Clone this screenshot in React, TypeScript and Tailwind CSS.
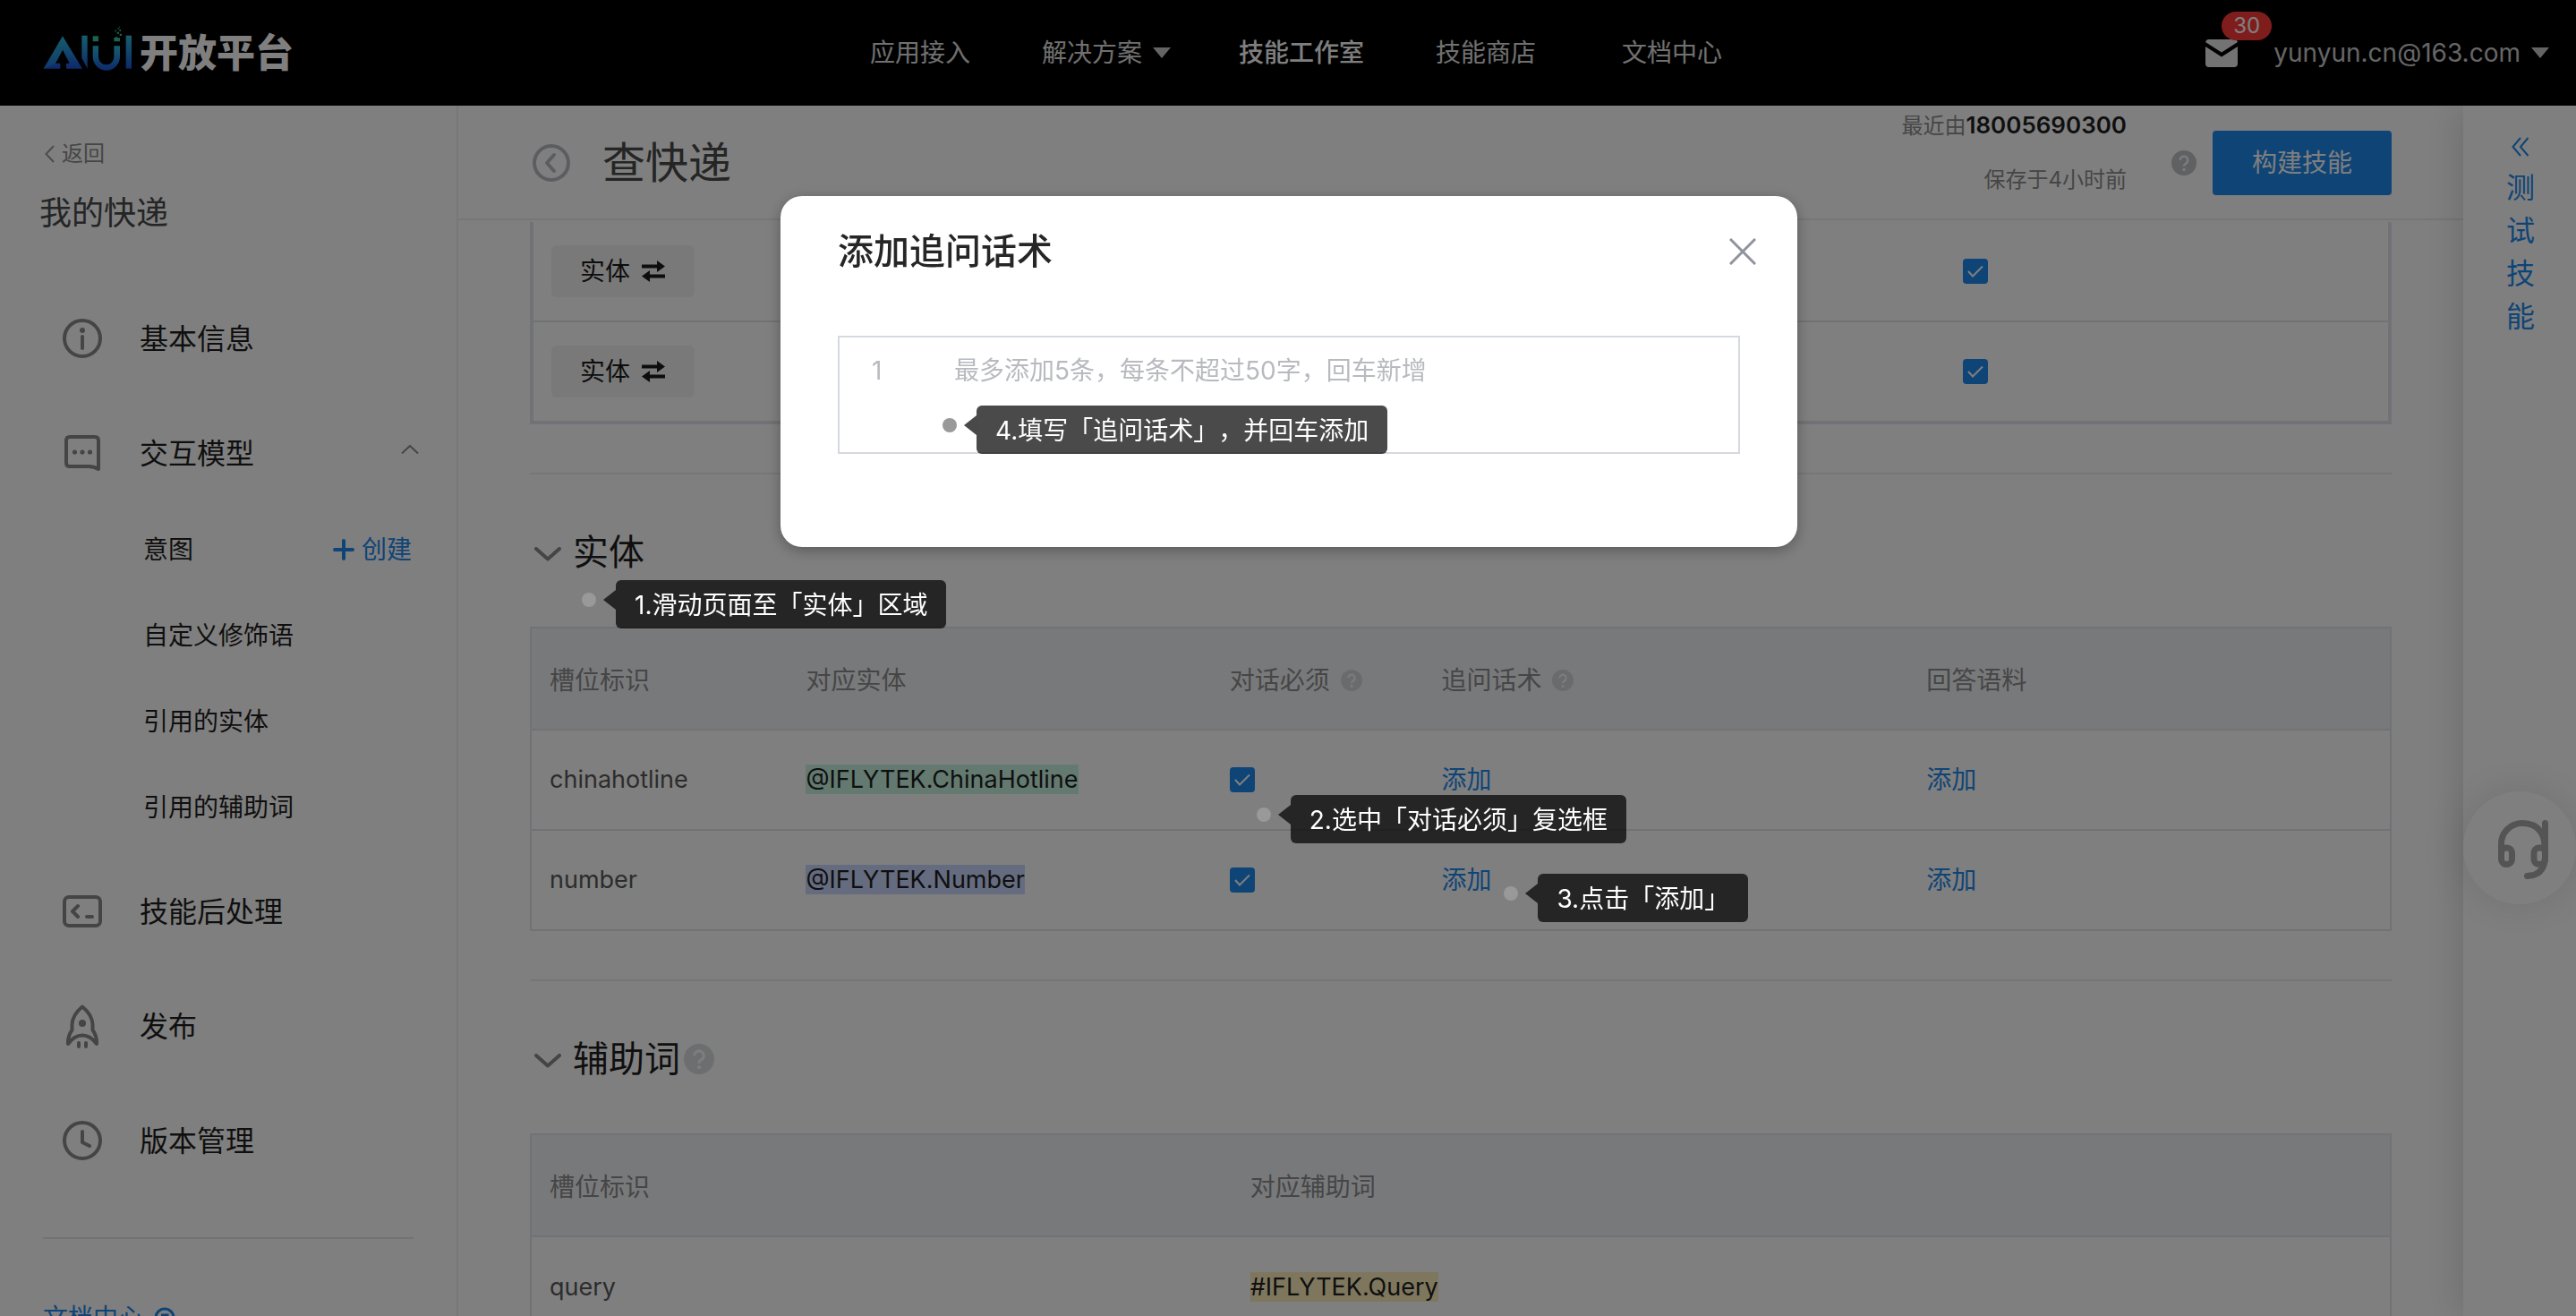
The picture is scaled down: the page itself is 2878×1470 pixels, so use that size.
import React from 'react';

const navItems = [
  { label: '应用接入', className: 'text-[#e0e0e0]' },
  { label: '解决方案', className: '-mr-1 text-[#e0e0e0]', caret: true },
  { label: '技能工作室', className: 'font-medium text-white' },
  { label: '技能商店', className: 'pr-4 text-[#e0e0e0]' },
  { label: '文档中心', className: 'text-[#e0e0e0]' },
];

function Caret() {
  return (
    <svg viewBox="0 0 20 12" className="h-3 w-5" fill="#c8c8c8" aria-hidden="true">
      <path d="M0 0h20L10 12z" />
    </svg>
  );
}

function LogoMark() {
  return (
    <svg viewBox="24 28 300 180" className="h-[60px] w-[100px]" role="img" aria-label="AIUI">
      <defs>
        <linearGradient id="blue" x1="0" y1="0" x2="0" y2="1">
          <stop offset="0" stopColor="#2cbcd4" />
          <stop offset="0.45" stopColor="#2490dc" />
          <stop offset="1" stopColor="#1c52d8" />
        </linearGradient>
      </defs>
      <path d="M90 62L156 171H102V153H113L90 108L66 153H82V171H26z" fill="url(#blue)" />
      <path d="M90 62L26 171L66 153L90 108z" fill="#2fa4cc" opacity="0.45" />
      <path d="M154 60h19v111l-19-36z" fill="url(#blue)" />
      <path d="M191 95h19v36a26 27 0 0 0 52 0V95h20v36a45.500 46 0 0 1-91 0z" fill="url(#blue)" />
      <path d="M302 60h19v111h-19z" fill="url(#blue)" />
      <path
        d="M191 62h19v18h-19zM262 68l8-4 6 4h6v12h-20zM272 48h7v6h-7zM281 54h7v7h-7zM265 42h5v5h-5zM280 40h5v6h-5zM275 35h4v4h-4zM279 30h3v3h-3z"
        fill="#38c49c"
      />
    </svg>
  );
}

function Header() {
  return (
    <header className="grid h-[118px] shrink-0 grid-cols-[1fr_auto_1fr] items-center bg-black pl-12 pr-[30px]">
      <a href="#home" className="flex items-center gap-2">
        <LogoMark />
        <span className="text-[43px] font-black leading-none text-white">开放平台</span>
      </a>
      <nav className="flex items-center gap-20 text-[28px]">
        {navItems.map((item) => (
          <a key={item.label} href="#nav" className={item.className}>
            {item.caret ? (
              <span className="flex items-center gap-3">
                {item.label}
                <Caret />
              </span>
            ) : (
              item.label
            )}
          </a>
        ))}
      </nav>
      <div className="flex items-center justify-end">
        <button type="button" className="relative mr-10" aria-label="消息">
          <svg viewBox="0 0 36 31" className="h-[31px] w-9" fill="#e6e6e6" aria-hidden="true">
            <path d="M3.500 0h29Q35 0 36 3L18 14.500 0 3Q1 0 3.500 0z" />
            <path d="M0 8l18 11.500L36 8v19q0 4-4 4H4q-4 0-4-4z" />
          </svg>
          <span className="absolute -top-[31px] left-[18px] flex h-8 w-14 items-center justify-center rounded-full bg-[#ff3b3b] text-[24px] text-white">
            30
          </span>
        </button>
        <button type="button" className="flex items-center gap-3 text-[28px] text-[#cccccc]">
          yunyun.cn@163.com
          <Caret />
        </button>
      </div>
    </header>
  );
}

const iconProps = {
  viewBox: '0 0 44 44',
  className: 'h-11 w-11',
  fill: 'none',
  stroke: '#8a8a8a',
  strokeWidth: 4,
  strokeLinecap: 'round' as const,
  strokeLinejoin: 'round' as const,
  'aria-hidden': true,
};

const InfoIcon = () => (
  <svg {...iconProps}>
    <circle cx="22" cy="22" r="20" />
    <path d="M22 20v13" />
    <circle cx="22" cy="13" r="3" fill="#8a8a8a" stroke="none" />
  </svg>
);
const ChatIcon = () => (
  <svg {...iconProps}>
    <path d="M8 4h28q4 0 4 4v32q-5-3-11-3H8q-4 0-4-4V8q0-4 4-4z" />
    <g fill="#8a8a8a" stroke="none">
      <circle cx="13.500" cy="21" r="2.600" />
      <circle cx="22" cy="21" r="2.600" />
      <circle cx="30.500" cy="21" r="2.600" />
    </g>
  </svg>
);
const CodeIcon = () => (
  <svg {...iconProps}>
    <rect x="2" y="6" width="40" height="32" rx="5" />
    <path d="M17 16l-6 6 6 6M27 28h6" />
  </svg>
);
const RocketIcon = () => (
  <svg {...iconProps} overflow="visible">
    <path d="M22 0.500q11 9 11.500 20v6q5 7 4.500 15.500q-7-9.500-16-9.500T6 42q-0.500-8.500 4.500-15.500v-6Q11 9.500 22 0.500z" />
    <circle cx="22" cy="19" r="4" fill="#8a8a8a" stroke="none" />
    <path d="M18 41v4M26 41v4" />
  </svg>
);
const ClockIcon = () => (
  <svg {...iconProps}>
    <circle cx="22" cy="22" r="20" />
    <path d="M22 12v12l8 4" />
  </svg>
);

function MenuItem({ icon, label, open }: { icon: React.ReactNode; label: string; open?: boolean }) {
  return (
    <a href="#menu" className="flex h-32 items-center pl-[70px] pr-[42px] text-[32px] text-[#1f1f1f]">
      {icon}
      <span className="ml-[42px] pt-[2px]">{label}</span>
      {open && (
        <svg viewBox="0 0 20 10" className="mb-2 ml-auto h-[10px] w-5" fill="none" stroke="#8a8a8a" strokeWidth="2" aria-hidden="true">
          <path d="M1 9.500L10 1l9 8.500" />
        </svg>
      )}
    </a>
  );
}

function Sidebar() {
  return (
    <aside className="w-[512px] shrink-0 overflow-hidden border-r-2 border-[#f0f0f2] bg-white pt-9">
      <a href="#back" className="flex h-9 items-center gap-2 pl-[50px] text-[24px] text-[#8c8c8c]">
        <svg viewBox="0 0 11 20" className="h-5 w-[11px]" fill="none" stroke="#999" strokeWidth="2" aria-hidden="true">
          <path d="M10 1L1.500 10 10 19" />
        </svg>
        返回
      </a>
      <h2 className="mt-5 pl-11 text-[36px] leading-[56px] text-[#4a4a4a]">我的快递</h2>
      <nav className="mt-12">
        <MenuItem icon={<InfoIcon />} label="基本信息" />
        <MenuItem icon={<ChatIcon />} label="交互模型" open />
        <ul className="-mt-1 mb-1 text-[28px] text-[#1f1f1f]">
          <li className="flex h-24 items-center justify-between pl-40 pr-[50px]">
            <a href="#intent">意图</a>
            <button type="button" className="flex items-center gap-2 text-[#1e88ec]">
              <svg viewBox="0 0 24 24" className="h-6 w-6" stroke="currentColor" strokeWidth="4" strokeLinecap="round" aria-hidden="true">
                <path d="M12 2v20M2 12h20" />
              </svg>
              创建
            </button>
          </li>
          {['自定义修饰语', '引用的实体', '引用的辅助词'].map((t) => (
            <li key={t} className="flex h-24 items-center pl-40">
              <a href="#sub">{t}</a>
            </li>
          ))}
        </ul>
        <MenuItem icon={<CodeIcon />} label="技能后处理" />
        <MenuItem icon={<RocketIcon />} label="发布" />
        <MenuItem icon={<ClockIcon />} label="版本管理" />
      </nav>
      <hr className="mx-12 mt-11 border-t-2 border-[#e4e5ee]" />
      <a href="#docs" className="mt-[68px] flex h-10 items-center gap-3 pl-12 text-[28px] text-[#1e88ec]">
        文档中心
        <svg viewBox="0 0 24 24" className="h-6 w-6" fill="none" stroke="currentColor" strokeWidth="3" aria-hidden="true">
          <circle cx="12" cy="12" r="10" />
          <path d="M8 9h7v7M15 9l-7 7" />
        </svg>
      </a>
    </aside>
  );
}

function Help({ size, color }: { size: string; color: string }) {
  return (
    <svg viewBox="0 0 24 24" className={size} aria-hidden="true">
      <circle cx="12" cy="12" r="12" fill={color} />
      <path d="M8.300 9.300a3.700 3.700 0 1 1 5.600 3.200q-1.900 1.100-1.900 2.800" fill="none" stroke="#fff" strokeWidth="2.200" opacity="0.85" />
      <circle cx="12" cy="18.500" r="1.500" fill="#fff" opacity="0.85" />
    </svg>
  );
}

function Callout({ text, place }: { text: string; place: string }) {
  return (
    <span className={`absolute z-50 flex items-start whitespace-nowrap text-[28px] text-white [text-spacing-trim:space-all] ${place}`}>
      <span className="mr-2 mt-[14px] h-4 w-4 rounded-full bg-[#999999]" />
      <svg viewBox="0 0 14 22" className="mt-[11px] h-[22px] w-[14px]" fill="#000" opacity="0.71" aria-hidden="true">
        <path d="M0 11L14 0v22z" />
      </svg>
      <span className="h-[54px] rounded-[6px] bg-black/71 px-[21px] leading-[56px]">{text}</span>
    </span>
  );
}

function Check({ label }: { label: string }) {
  return (
    <span className="grid h-7 w-7">
      <input
        type="checkbox"
        defaultChecked
        aria-label={label}
        className="col-start-1 row-start-1 h-7 w-7 appearance-none rounded-[4px] bg-[#1e88ec]"
      />
      <svg viewBox="0 0 28 28" className="pointer-events-none col-start-1 row-start-1 h-7 w-7" fill="none" stroke="#fff" strokeWidth="2" aria-hidden="true">
        <path d="M6 14l5 5.500L22 8.500" />
      </svg>
    </span>
  );
}

function TypeButton() {
  return (
    <button type="button" className="flex h-[58px] items-center gap-3 rounded-[6px] bg-[#f3f3f3] px-8 text-[28px] text-[#1a1a1a]">
      实体
      <svg viewBox="0 0 28 24" className="h-6 w-7" fill="none" stroke="currentColor" strokeWidth="4" aria-hidden="true">
        <path d="M1 6.500h20M27 17.500H7" />
        <path d="M18 0l9 6.500-9 6.500zM10 11l-9 6.500 9 6.500z" fill="currentColor" stroke="none" />
      </svg>
    </button>
  );
}

function SectionTitle({ text, help, children }: { text: string; help?: boolean; children?: React.ReactNode }) {
  return (
    <div className="relative mt-[54px] h-[172px] border-t-2 border-[#ebecf3] pt-[59px]">
      <h3 className="flex h-14 items-center text-[40px] leading-[56px] text-[#1f1f1f]">
        <svg viewBox="0 0 30 16" className="ml-[5px] mr-[13px] mt-1 h-4 w-[30px]" fill="none" stroke="#8a8a8a" strokeWidth="4" strokeLinecap="round" strokeLinejoin="round" aria-hidden="true">
          <path d="M2 2l13 11.500L28 2" />
        </svg>
        {text}
        {help && (
          <span className="ml-1">
            <Help size="h-[34px] w-[34px]" color="#d9dce0" />
          </span>
        )}
      </h3>
      {children}
    </div>
  );
}

const th = 'h-[114px] border-b-2 border-[#e2e4ea] pl-5 pt-[3px] text-left font-normal';
const td = 'h-28 pl-5 border-[#e2e4ea]';

const slots = [
  { name: 'chinahotline', entity: '@IFLYTEK.ChinaHotline', color: 'bg-[#c8f4e2]' },
  { name: 'number', entity: '@IFLYTEK.Number', color: 'bg-[#cdd8ff]' },
];

function Content() {
  return (
    <main className="min-w-0 flex-1 overflow-hidden bg-white">
      <div className="flex h-32 items-center border-b-2 border-[#ebecf3] px-20 pt-[2px]">
        <button type="button" aria-label="返回" className="ml-[3px]">
          <svg viewBox="0 0 42 42" className="h-[42px] w-[42px]" fill="none" stroke="#b8bbc0" strokeWidth="4" strokeLinecap="round" strokeLinejoin="round" aria-hidden="true">
            <circle cx="21" cy="21" r="19" />
            <path d="M24 12l-8 9 8 9" />
          </svg>
        </button>
        <h1 className="ml-9 text-[48px] leading-[64px] text-[#4a4a4a]">查快递</h1>
        <div className="ml-auto mr-[50px] pb-6 text-right text-[24px] leading-[60px] text-[#8c8c8c]">
          <p>
            最近由<span className="text-[26px] font-semibold text-[#1f1f1f]">18005690300</span>
          </p>
          <p>保存于4小时前</p>
        </div>
        <Help size="h-7 w-7" color="#bfc2c7" />
        <button type="button" className="ml-[18px] h-[72px] w-[200px] rounded-[4px] bg-[#1e88ec] text-[28px] text-white">
          构建技能
        </button>
      </div>

      <div className="px-20">
        <div className="mt-[2px] border-x-4 border-b-4 border-[#e2e4ea]">
          <table className="w-full table-fixed border-separate border-spacing-0">
            <colgroup>
              <col className="w-[76%]" />
              <col />
            </colgroup>
            <tbody>
              {['手机号', '单号'].map((label, i) => (
                <tr key={label}>
                  <td className={i ? 'h-28 border-t-2 border-[#e2e4ea] pl-5' : 'h-[110px] pl-5'}>
                    <TypeButton />
                  </td>
                  <td className={i ? 'h-28 border-t-2 border-[#e2e4ea] pl-[22px]' : 'h-[110px] pl-[22px]'}>
                    <Check label={label} />
                  </td>
                </tr>
              ))}
            </tbody>
          </table>
        </div>

        <SectionTitle text="实体">
          <Callout text="1.滑动页面至「实体」区域" place="left-[58px] top-[118px]" />
        </SectionTitle>
        <div className="border-2 border-[#e2e4ea]">
          <table className="w-full table-fixed border-separate border-spacing-0 text-[28px] text-[#595959]">
            <colgroup>
              <col className="w-[13.8%]" />
              <col className="w-[22.8%]" />
              <col className="w-[11.4%]" />
              <col className="w-[26.1%]" />
              <col />
            </colgroup>
            <thead className="bg-[#f1f3f7] text-[#8c8c8c]">
              <tr>
                <th className={th}>槽位标识</th>
                <th className={th}>对应实体</th>
                <th className={th}>
                  <span className="flex items-center gap-3">
                    对话必须
                    <Help size="h-6 w-6" color="#d3d6db" />
                  </span>
                </th>
                <th className={th}>
                  <span className="flex items-center gap-3">
                    追问话术
                    <Help size="h-6 w-6" color="#d3d6db" />
                  </span>
                </th>
                <th className={th}>回答语料</th>
              </tr>
            </thead>
            <tbody>
              {slots.map((slot, i) => {
                const cell = i ? `${td} border-t-2` : 'h-[110px] pl-5';
                return (
                  <tr key={slot.name}>
                    <td className={`${cell} text-[27px]`}>{slot.name}</td>
                    <td className={`${cell} text-[27px]`}>
                      <span className={`text-[#1f1f1f] ${slot.color}`}>{slot.entity}</span>
                    </td>
                    <td className={cell}>
                      <div className="relative">
                        <Check label={slot.name} />
                        {i === 0 && <Callout text="2.选中「对话必须」复选框" place="left-[30px] top-[31px]" />}
                      </div>
                    </td>
                    <td className={cell}>
                      <div className="relative">
                        <button type="button" className="text-[#1e88ec]">添加</button>
                        {i === 1 && <Callout text="3.点击「添加」" place="left-[70px] top-[14px]" />}
                      </div>
                    </td>
                    <td className={cell}>
                      <button type="button" className="text-[#1e88ec]">添加</button>
                    </td>
                  </tr>
                );
              })}
            </tbody>
          </table>
        </div>

        <SectionTitle text="辅助词" help />
        <div className="border-2 border-[#e2e4ea]">
          <table className="w-full table-fixed border-separate border-spacing-0 text-[28px] text-[#595959]">
            <colgroup>
              <col className="w-[37.7%]" />
              <col />
            </colgroup>
            <thead className="bg-[#f1f3f7] text-[#8c8c8c]">
              <tr>
                <th className={th}>槽位标识</th>
                <th className={th}>对应辅助词</th>
              </tr>
            </thead>
            <tbody>
              <tr className="text-[27px]">
                <td className={td}>query</td>
                <td className={td}>
                  <span className="bg-[#fceebc] text-[#1f1f1f]">#IFLYTEK.Query</span>
                </td>
              </tr>
            </tbody>
          </table>
        </div>
      </div>
    </main>
  );
}

function TestRail() {
  return (
    <aside className="relative w-[126px] shrink-0 bg-white pt-[35px] shadow-[-4px_0_40px_rgba(0,0,0,0.15)]">
      <button type="button" className="ml-[46px] flex w-9 flex-col items-center text-[32px] leading-[48px] text-[#1e88ec]">
        <svg viewBox="0 0 20 22" className="mb-[11px] h-[22px] w-5" fill="none" stroke="currentColor" strokeWidth="2" aria-hidden="true">
          <path d="M10 1L1.500 11 10 21M18.500 1L10 11l8.500 10" />
        </svg>
        {['测', '试', '技', '能'].map((c) => (
          <span key={c}>{c}</span>
        ))}
      </button>
      <button
        type="button"
        aria-label="客服"
        className="absolute left-0 top-[766px] h-[126px] w-[126px] rounded-full bg-white shadow-[0_0_50px_rgba(0,0,0,0.12)]"
      >
        <svg viewBox="0 0 126 126" fill="none" stroke="#a8a8a8" strokeWidth="7" strokeLinecap="round" aria-hidden="true">
          <path d="M42.500 66V58.500A23.500 23 0 0 1 66 35.500q14 0 20.500 9.500q4 6 4.500 15" />
          <path d="M91.500 35.500V74q-1 16-13 19.500L71.500 94.500" />
          <path d="M88 48h7v24h-7z" fill="#a8a8a8" stroke="none" />
          <rect x="42.500" y="63" width="12" height="18.500" rx="5.500" />
          <rect x="79" y="63" width="12.500" height="18.500" rx="5.500" />
        </svg>
      </button>
    </aside>
  );
}

function PromptDialog() {
  return (
    <div className="fixed inset-0 z-40 flex items-start justify-center bg-black/50 pl-[2px] pt-[219px]">
      <div
        role="dialog"
        aria-modal="true"
        aria-labelledby="dialog-title"
        className="w-full max-w-[1136px] rounded-[24px] bg-white px-16 pb-[104px] pt-9 shadow-[0_4px_16px_rgba(0,0,0,0.3)]"
      >
        <div className="flex h-[52px] items-center justify-between">
          <h2 id="dialog-title" className="text-[40px] font-medium leading-[52px] text-[#262626]">
            添加追问话术
          </h2>
          <button type="button" aria-label="关闭" className="-mr-[18px]">
            <svg viewBox="0 0 30 30" className="h-[30px] w-[30px]" fill="none" stroke="#8f939b" strokeWidth="3" aria-hidden="true">
              <path d="M1 1l28 28M29 1L1 29" />
            </svg>
          </button>
        </div>
        <div className="relative mt-[68px] h-[132px] border-2 border-[#d5d9e0]">
          <div className="flex h-[74px] items-center pl-9 text-[28px] text-[#b8babf]">
            <label htmlFor="prompt" className="w-[92px]">1</label>
            <input
              id="prompt"
              type="text"
              placeholder="最多添加5条，每条不超过50字，回车新增"
              className="min-w-0 flex-1 bg-transparent outline-none placeholder:text-[#b8babf]"
            />
          </div>
          <Callout text="4.填写「追问话术」，并回车添加" place="left-[115px] top-[76px]" />
        </div>
      </div>
    </div>
  );
}

export default function App() {
  return (
    <div className="flex h-screen flex-col overflow-hidden bg-white font-['Inter','Noto_Sans_CJK_SC',sans-serif]">
      <Header />
      <div className="flex min-h-0 flex-1">
        <Sidebar />
        <Content />
        <TestRail />
      </div>
      <PromptDialog />
    </div>
  );
}
